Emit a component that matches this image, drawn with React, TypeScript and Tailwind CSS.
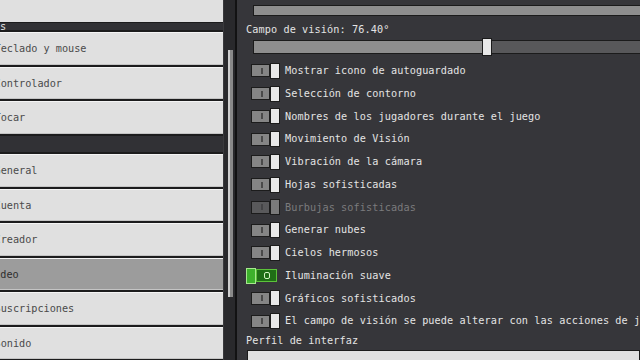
const font = { fontFamily: '"DejaVu Sans Mono", "Liberation Mono", monospace' };

type Opt = { label: string; on?: boolean; disabled?: boolean };

const options: Opt[] = [
  { label: 'Mostrar icono de autoguardado' },
  { label: 'Selección de contorno' },
  { label: 'Nombres de los jugadores durante el juego' },
  { label: 'Movimiento de Visión' },
  { label: 'Vibración de la cámara' },
  { label: 'Hojas sofisticadas' },
  { label: 'Burbujas sofisticadas', disabled: true },
  { label: 'Generar nubes' },
  { label: 'Cielos hermosos' },
  { label: 'Iluminación suave', on: true },
  { label: 'Gráficos sofisticados' },
  { label: 'El campo de visión se puede alterar con las acciones de juego' },
];

function NavButton({ label, selected, shift = '-ml-[5.5px]' }: { label: string; selected?: boolean; shift?: string }) {
  return (
    <div
      className={`h-[32.5px] shrink-0 flex items-center border-t border-[#f4f4f4] shadow-[inset_0_-1px_0_#c4c4c4] ${
        selected ? 'bg-[#9c9c9c] border-[#b0b0b0] text-[#2e2e2e]' : 'bg-[#e0e0e0] text-[#4a4a4a]'
      }`}
    >
      <span className={`${shift} text-[10.2px] whitespace-nowrap`}>{label}</span>
    </div>
  );
}

function Toggle({ on, disabled }: { on?: boolean; disabled?: boolean }) {
  if (on) {
    return (
      <div className="flex items-center">
        <div className="w-[10px] h-[16px] bg-[#3db12c] border border-[#a7e88f]" />
        <div className="w-[21px] h-[13px] bg-[#1f6e16] border border-[#5cc23a] flex items-center justify-center">
          <div className="w-[6px] h-[7px] border border-[#d4f5c4] rounded-[2px]" />
        </div>
      </div>
    );
  }
  return (
    <div className="flex items-center">
      <div
        className={`w-[19px] h-[13px] border border-[#1c1c1c] flex items-center pl-[9px] ${
          disabled ? 'bg-[#59595b]' : 'bg-[#858585]'
        }`}
      >
        <div className={`w-[2px] h-[6px] ${disabled ? 'bg-[#444446]' : 'bg-[#4a4a4a]'}`} />
      </div>
      <div
        className={`w-[10px] h-[16px] border border-[#1c1c1c] ${disabled ? 'bg-[#7a7a7a]' : 'bg-[#e8e8e8]'}`}
      />
    </div>
  );
}

export default function App() {
  return (
    <div style={font} className="w-[640px] h-[360px] overflow-hidden flex bg-[#36363a]">
      {/* left settings list */}
      <div className="w-[224px] shrink-0 flex flex-col bg-[#1c1c1d] gap-[2px] border-r border-[#3a3a3d]">
        <div className="h-[22px] shrink-0 bg-[#e0e0e0] -mb-[2px]" />
        <div className="h-[8px] shrink-0 bg-[#313135] flex items-start border-t border-[#1c1c1d]">
          <span className="text-[10.2px] leading-[7px] text-[#e4e4e4]">s</span>
        </div>
        <NavButton label="Teclado y mouse" />
        <NavButton label="Controlador" />
        <NavButton label="Tocar" />
        <div className="h-[16.5px] shrink-0 bg-[#313135]" />
        <NavButton label="General" />
        <NavButton label="Cuenta" />
        <NavButton label="Creador" />
        <NavButton label="Video" selected shift="-ml-[12px]" />
        <NavButton label="Suscripciones" />
        <NavButton label="Sonido" />
      </div>

      {/* scrollbar */}
      <div className="w-[13px] shrink-0 bg-[#29292c] border-r-2 border-[#121213] pl-[4px] pt-[50px]">
        <div className="w-[5px] h-[247px] bg-[#8a8a8a] border-l-2 border-[#cfcfcf]" />
      </div>

      {/* right panel */}
      <div className="flex-1 min-w-0 flex flex-col pl-[9px] text-[#e4e4e4] text-[10.2px] tracking-[0.1px]">
        <div className="mt-[5px] ml-[7px] w-[420px] h-[11px] shrink-0 bg-[#8e8e8e] border border-[#1b1b1b]" />
        <div className="mt-[7px] h-[14px] shrink-0 flex items-center whitespace-nowrap">
          Campo de visión: 76.40°
        </div>
        <div className="mt-[3px] ml-[7px] w-[420px] h-[14px] shrink-0 relative flex border border-[#1b1b1b]">
          <div className="w-[229px] bg-[#8e8e8e]" />
          <div className="flex-1 bg-[#58585a]" />
          <div className="absolute left-[228px] -top-[3px] w-[10px] h-[18px] bg-[#e8e8e8] border border-[#1b1b1b]" />
        </div>

        <div className="mt-[5.5px] flex flex-col">
          {options.map((o) => (
            <div key={o.label} className="h-[22.75px] flex items-center whitespace-nowrap">
              <div className={`w-[34px] shrink-0 flex ${o.on ? 'justify-start' : 'justify-end'}`}>
                <Toggle on={o.on} disabled={o.disabled} />
              </div>
              <span className={`ml-[5px] ${o.disabled ? 'text-[#7b7b7d]' : 'text-[#e4e4e4]'}`}>{o.label}</span>
            </div>
          ))}
        </div>

        <div className="mt-[1px] h-[14px] shrink-0 flex items-center whitespace-nowrap">Perfil de interfaz</div>
        <div className="mt-[2px] ml-[1px] h-[30px] shrink-0 bg-[#e0e0e0] border border-[#1b1b1b]" />
      </div>
    </div>
  );
}
